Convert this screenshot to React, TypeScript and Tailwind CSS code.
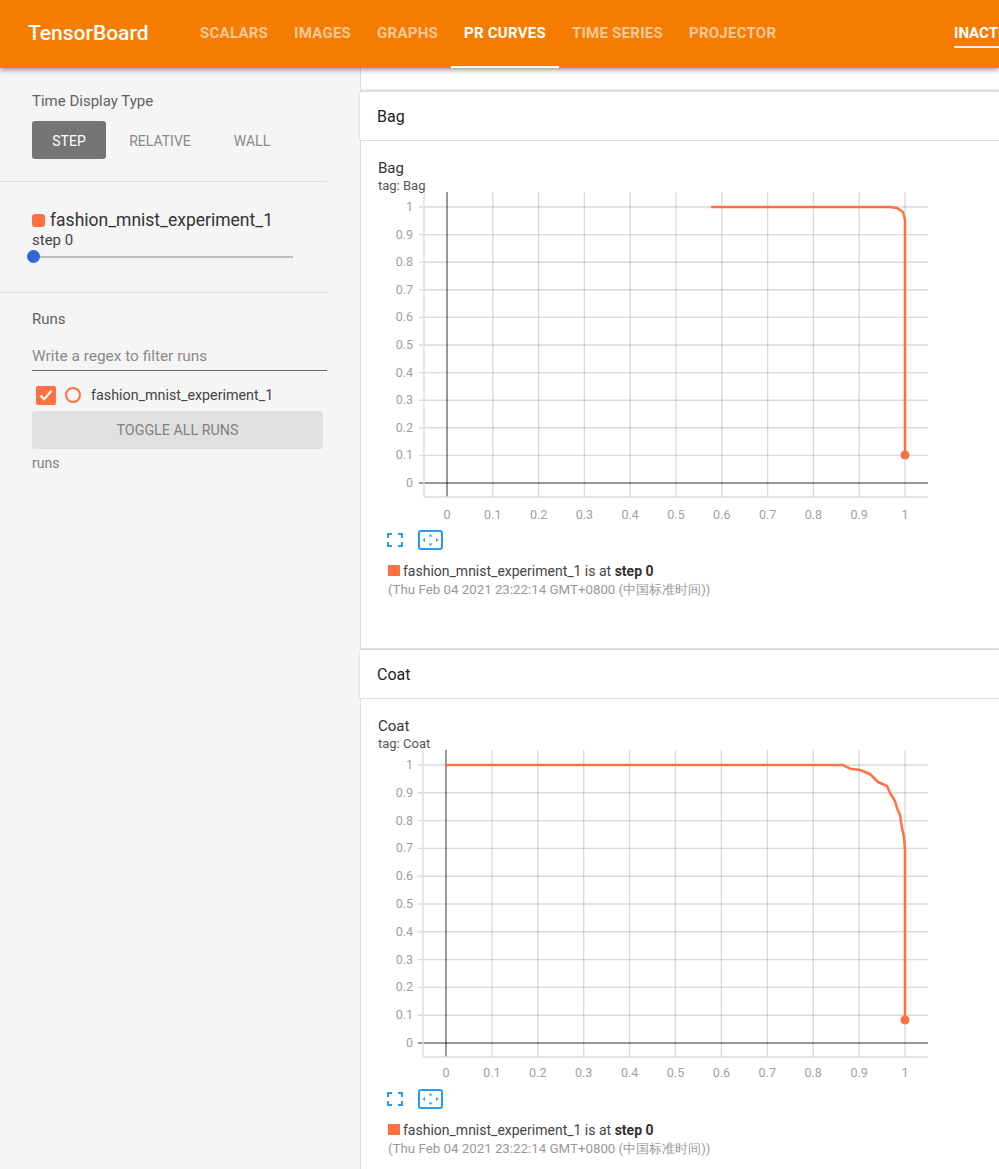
import React from 'react';

// ======================================================
// CHART
// ======================================================

const ORANGE = '#ff7043';
const BLUE = '#2b9af3';
const TICKS = [0, 0.1, 0.2, 0.3, 0.4, 0.5, 0.6, 0.7, 0.8, 0.9, 1];

interface ChartProps {
  x0: number;
  x1: number;
  y0: number;
  y1: number;
  left: number;
  bottom: number;
  height: number;
  points: string;
  dot: [number, number];
}

const Chart: React.FC<ChartProps> = ({ x0, x1, y0, y1, left, bottom, height, points, dot }) => {
  const right = 550;
  const px = (v: number) => x0 + (x1 - x0) * v;
  const py = (v: number) => y0 + (y1 - y0) * v;
  return (
    <svg width="560" height={height} className="block" style={{ fontFamily: 'Roboto, sans-serif' }}>
      {TICKS.map((t) => (
        <g key={t}>
          <line x1={px(t)} x2={px(t)} y1={0} y2={bottom} stroke="#000" strokeOpacity={t === 0 ? 0.4 : 0.14} strokeWidth={t === 0 ? 2 : 1.4} />
          <line x1={left - 5} x2={right} y1={py(t)} y2={py(t)} stroke="#000" strokeOpacity={t === 0 ? 0.4 : 0.14} strokeWidth={t === 0 ? 2 : 1.4} />
          <text x={35} y={py(t) + 4} textAnchor="end" fontSize="12.5" fill="#a0a0a0">{t}</text>
          <text x={px(t)} y={327} textAnchor="middle" fontSize="12.5" fill="#a0a0a0">{t}</text>
        </g>
      ))}
      <line x1={left} x2={left} y1={0} y2={bottom} stroke="#ddd" strokeWidth="1.4" />
      <line x1={left} x2={right} y1={bottom} y2={bottom} stroke="#ddd" strokeWidth="1.4" />
      <polyline points={points} fill="none" stroke={ORANGE} strokeWidth="2.5" strokeLinejoin="round" />
      <circle cx={dot[0]} cy={dot[1]} r="4.5" fill={ORANGE} />
    </svg>
  );
};

// ======================================================
// ICONOS
// ======================================================

const FullscreenIcon = () => (
  <svg width="16" height="14" viewBox="0 0 16 14" fill="none" stroke={BLUE} strokeWidth="2">
    <path d="M1 5V1h4M11 1h4v4M15 9v4h-4M5 13H1V9" />
  </svg>
);

const FitIcon = () => (
  <svg width="25" height="20" viewBox="0 0 25 20" fill="none">
    <rect x="1" y="1" width="23" height="18" rx="2" stroke={BLUE} strokeWidth="2" />
    <path d="M12.5 4l2 2.5h-4zM12.5 16l-2-2.5h4zM4.5 10l2.5-2v4zM20.5 10l-2.5 2v-4z" fill={BLUE} />
  </svg>
);

// ======================================================
// TARJETA
// ======================================================

interface CardProps extends ChartProps {
  tag: string;
  gap: string;
}

const Card: React.FC<CardProps> = ({ tag, gap, ...chart }) => (
  <section>
    <div className="h-[49px] -ml-px bg-white border-b border-[#ddd] pl-[17px] pt-[2px] flex items-center text-base text-[#212121] shadow-[0_0_2px_rgba(0,0,0,0.2)]">
      {tag}
    </div>
    <div className="h-[509px] bg-white border-b-2 border-[#e4e4e4] pl-[17px] pt-[18px]">
      <div className="h-[18px] text-[15px] leading-[18px] text-[#333]">{tag}</div>
      <div className="h-[15px] text-[13px] leading-[18px] text-[#555]">tag: {tag}</div>
      <Chart {...chart} />
      <div className={`flex items-center h-[20px] pl-[9px] gap-[15px] ${gap}`}>
        <FullscreenIcon />
        <FitIcon />
      </div>
      <div className="mt-[12px] pl-[10px]">
        <div className="flex items-center h-[17px] text-sm text-[#444]">
          <span className="w-[12px] h-[11px] bg-[#ff7043] mr-[3px]" />
          <span>fashion_mnist_experiment_1 is at <b className="text-[#333]">step 0</b></span>
        </div>
        <div className="mt-[2px] text-[13.3px] leading-[17px] text-[#999]">
          (Thu Feb 04 2021 23:22:14 GMT+0800 (中国标准时间))
        </div>
      </div>
    </div>
  </section>
);

// ======================================================
// BARRA LATERAL
// ======================================================

const Sidebar = () => (
  <aside className="w-[361px] shrink-0 bg-[#f5f5f5] border-r border-[#ddd] pr-[33px] text-sm">
    <div className="h-[114px] border-b border-[#ddd] pl-[32px] pt-[23px]">
      <div className="h-[20px] leading-[20px] text-[15px] text-[#616161]">Time Display Type</div>
      <div className="flex mt-[10px] h-[38px] items-center text-[#8a8a8a]">
        <div className="w-[74px] h-[38px] pt-px rounded-[3px] bg-[#757575] text-white flex items-center justify-center">STEP</div>
        <div className="w-[108px] pt-px text-center">RELATIVE</div>
        <div className="w-[76px] pt-px text-center">WALL</div>
      </div>
    </div>
    <div className="relative h-[111px] border-b border-[#ddd] pl-[32px] pt-[29px]">
      <div className="flex items-center h-[19px] text-[17.5px] text-[#333]">
        <span className="w-[13px] h-[13px] rounded-[3px] bg-[#ff7043] mr-[5px]" />
        fashion_mnist_experiment_1
      </div>
      <div className="h-[20px] leading-[20px] text-[15px] text-[#444]">step 0</div>
      <div className="mt-[6px] ml-[1px] w-[260px] h-[2px] bg-[#bdbdbd]" />
      <div className="absolute left-[27px] top-[68px] w-[13px] h-[13px] rounded-full bg-[#3367d6]" />
    </div>
    <div className="pl-[32px] pt-[16px]">
      <div className="h-[20px] leading-[20px] text-[15px] text-[#616161]">Runs</div>
      <div className="mt-[11px] h-[31px] border-b border-[#666] leading-[32px] text-[15.4px] text-[#8a8a8a]">Write a regex to filter runs</div>
      <div className="flex items-center h-[40px] pt-[8px] pl-[4px] text-[14.3px] text-[#444]">
        <span className="w-[20px] h-[19px] rounded-[2px] bg-[#ff7043] flex items-center justify-center">
          <svg width="14" height="12" viewBox="0 0 14 12" fill="none" stroke="#fff" strokeWidth="2.2">
            <path d="M1.5 6.5l3.7 3.7 7.3-8.5" />
          </svg>
        </span>
        <span className="ml-[9px] w-[16px] h-[16px] rounded-full border-2 border-[#ff7043]" />
        <span className="ml-[10px]">fashion_mnist_experiment_1</span>
      </div>
      <div className="w-[291px] h-[38px] rounded-[3px] bg-[#e0e0e0] flex items-center justify-center text-[14.3px] text-[#808080]">
        TOGGLE ALL RUNS
      </div>
      <div className="mt-[6px] h-[17px] leading-[17px] text-sm text-[#808080]">runs</div>
    </div>
  </aside>
);

// ======================================================
// COMPONENTE PRINCIPAL
// ======================================================

const TABS = ['SCALARS', 'IMAGES', 'GRAPHS', 'PR CURVES', 'TIME SERIES', 'PROJECTOR'];

const BAG_POINTS = '333,15 512,15 519,16 525,20 527,28 527,263';
const COAT_POINTS = '68,15 465,15 472,18.7 482,20 492,24 500,32 509,36 512,43 517,51 519,58 522,65 524,78 526,87 527,100 527,270';

export default function App() {
  return (
    <div className="h-[1169px] overflow-hidden flex flex-col bg-white" style={{ fontFamily: 'Roboto, sans-serif' }}>
      <header className="relative z-10 h-[68px] shrink-0 bg-[#f57c00] text-white flex shadow-[0_2px_5px_rgba(0,0,0,0.4)] overflow-hidden">
        <div className="ml-[28px] w-[159px] text-[21px] font-medium leading-[66px]">TensorBoard</div>
        <nav className="flex text-[15px] font-bold tracking-[0.25px]">
          {TABS.map((tab) => (
            <div
              key={tab}
              className={`px-[13px] leading-[67px] border-b-2 ${tab === 'PR CURVES' ? 'border-white text-white' : 'border-transparent text-white/60'}`}
            >
              {tab}
            </div>
          ))}
        </nav>
        <div className="ml-auto w-[45px] shrink-0 overflow-hidden">
          <div className="h-[48px] border-b-2 border-white/90 text-[15px] font-bold leading-[67px] whitespace-nowrap">INACTIVE</div>
        </div>
      </header>
      <div className="flex flex-1 min-h-0">
        <Sidebar />
        <main className="flex-1 min-w-0 bg-white">
          <div className="h-[24px] bg-white border-b-[3px] border-[#e8e8e8]" />
          <Card
            tag="Bag"
            gap="mt-[3px]"
            x0={69}
            x1={527}
            y0={291}
            y1={15}
            left={46}
            bottom={305}
            height={335}
            points={BAG_POINTS}
            dot={[527, 263]}
          />
          <Card
            tag="Coat"
            gap="mt-[4px]"
            x0={68}
            x1={527}
            y0={293}
            y1={15}
            left={45}
            bottom={307}
            height={335}
            points={COAT_POINTS}
            dot={[527, 270]}
          />
        </main>
      </div>
    </div>
  );
}
